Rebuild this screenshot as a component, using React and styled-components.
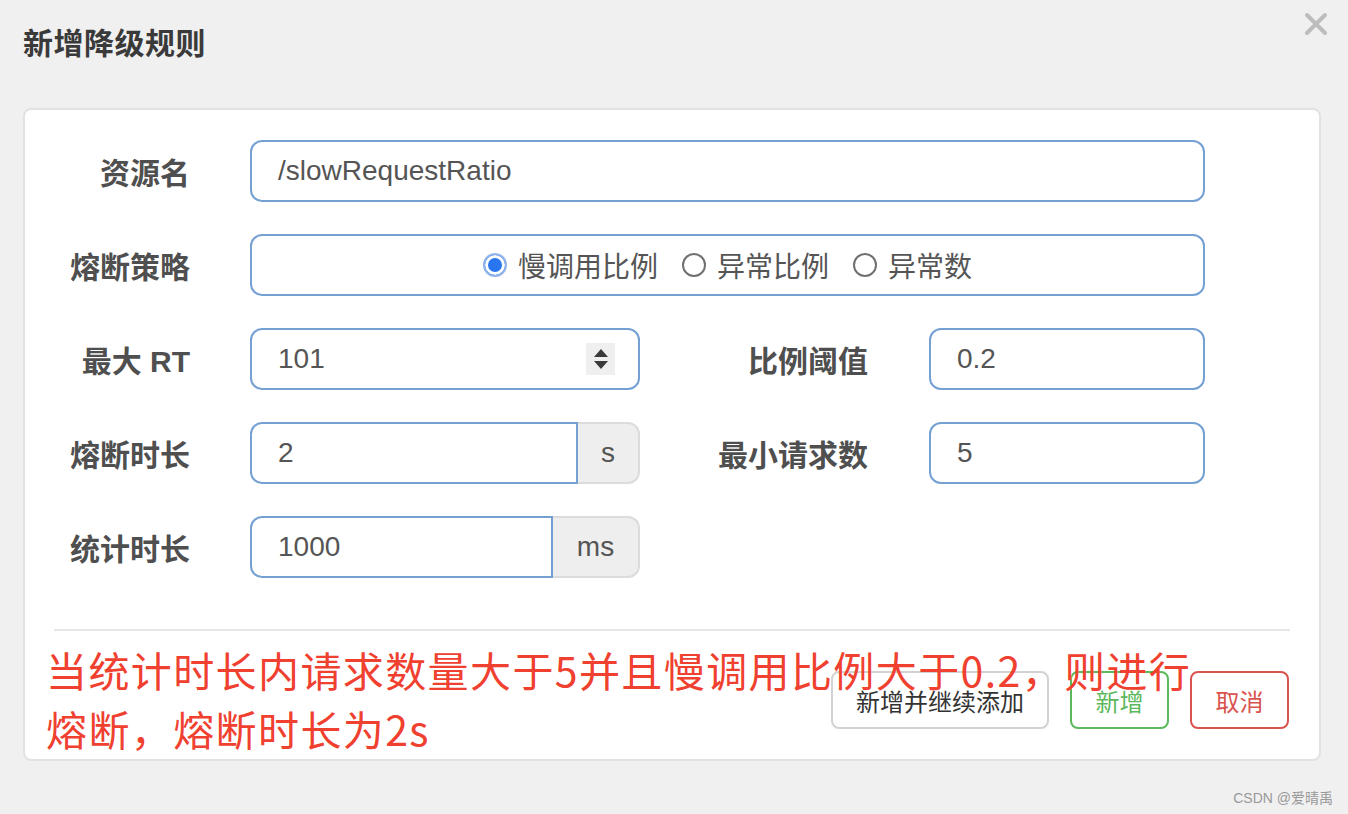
import styled, { createGlobalStyle } from "styled-components";

const GlobalStyle = createGlobalStyle`
  body {
    margin: 0;
    background: #f0f0f0;
    font-family: "Liberation Sans", "Noto Sans CJK SC", sans-serif;
  }
`;

const Page = styled.div`
  position: relative;
  width: 1348px;
  height: 814px;
  padding-left: 23px;
  box-sizing: border-box;
  overflow: hidden;
  background: #f0f0f0;
`;

const Header = styled.div`
  display: flex;
  justify-content: space-between;
  align-items: flex-start;
  width: 1305px;
  height: 108px;
`;

const Title = styled.h4`
  margin: 29px 0 0;
  font-size: 30px;
  line-height: 30px;
  font-weight: bold;
  letter-spacing: 0.5px;
  color: #3a3a3a;
`;

const CloseButton = styled.button`
  display: flex;
  margin-top: 12px;
  padding: 0;
  border: none;
  background: transparent;
  cursor: pointer;
`;

const Card = styled.div`
  position: relative;
  width: 1298px;
  box-sizing: border-box;
  padding: 30px 0;
  background: #fff;
  border: 2px solid #e2e2e2;
  border-radius: 8px;
`;

const Form = styled.div`
  display: flex;
  flex-direction: column;
  gap: 32px;
  padding-right: 114px;
`;

const Row = styled.div`
  display: flex;
  align-items: center;
  height: 62px;
`;

const Label = styled.label`
  flex: none;
  width: ${({ w }) => w || 165}px;
  margin-right: ${({ gap }) => gap || 60}px;
  text-align: right;
  font-size: 30px;
  font-weight: bold;
  color: #4f4f4f;
  white-space: nowrap;
`;

const Field = styled.div`
  display: flex;
  align-items: center;
  justify-content: ${({ center }) => (center ? "center" : "flex-start")};
  width: ${({ w }) => (w ? `${w}px` : "auto")};
  flex: ${({ w }) => (w ? "none" : "1")};
  height: 62px;
  box-sizing: border-box;
  padding: 0 ${({ center }) => (center ? 0 : 26)}px;
  border: 2px solid #74a0d3;
  border-radius: ${({ joined }) => (joined ? "12px 0 0 12px" : "12px")};
  font-size: 28px;
  color: #555;
  background: #fff;
`;

const Value = styled.span`
  flex: 1;
`;

const Group = styled.div`
  display: flex;
  width: ${({ w }) => w}px;
  flex: none;
`;

const Addon = styled.div`
  display: flex;
  align-items: center;
  justify-content: center;
  width: ${({ w }) => w}px;
  height: 62px;
  box-sizing: border-box;
  background: #eee;
  border: 2px solid #dcdcdc;
  border-left: none;
  border-radius: 0 12px 12px 0;
  font-size: 28px;
  color: #555;
`;

const Spinner = styled.div`
  display: flex;
  flex-direction: column;
  align-items: center;
  justify-content: center;
  gap: 4px;
  width: 29px;
  height: 32px;
  margin-right: -3px;
  background: #efefef;
`;

const Radios = styled.div`
  display: flex;
  align-items: center;
`;

const RadioItem = styled.span`
  display: flex;
  align-items: center;
  gap: 11px;
  margin-right: 24px;
  font-family: "Noto Sans CJK SC", sans-serif;
  font-size: 28px;
  color: #555;
  &:last-child {
    margin-right: 0;
  }
`;

const RadioDot = styled.span`
  width: 24px;
  height: 24px;
  box-sizing: border-box;
  border-radius: 50%;
  border: 2px solid ${({ checked }) => (checked ? "#8fb3ea" : "#707070")};
  background: ${({ checked }) => (checked ? "#2a76ee" : "#fff")};
  box-shadow: ${({ checked }) => (checked ? "inset 0 0 0 3px #fff" : "none")};
`;

const Divider = styled.hr`
  margin: 51px 29px 0;
  border: none;
  height: 2px;
  background: #e6e6e6;
`;

const Footer = styled.div`
  display: flex;
  justify-content: flex-end;
  gap: 21px;
  padding: 40px 30px 0 0;
`;

const Button = styled.button`
  width: ${({ w }) => w}px;
  height: 58px;
  padding: 0;
  background: #fff;
  border: 2px solid ${({ color }) => color || "#d2d2d2"};
  border-radius: 8px;
  font-family: "Noto Sans CJK SC", sans-serif;
  font-size: 24px;
  color: ${({ color }) => color || "#333"};
  cursor: pointer;
`;

const Note = styled.div`
  position: absolute;
  left: 21px;
  top: 530px;
  font-family: "Noto Sans CJK SC", sans-serif;
  font-size: 41px;
  line-height: 59px;
  letter-spacing: 1.4px;
  color: #f0402f;
  white-space: nowrap;
  pointer-events: none;
`;

const Watermark = styled.div`
  position: absolute;
  right: 15px;
  bottom: 7px;
  font-family: "Liberation Sans", "Noto Sans CJK SC", sans-serif;
  font-size: 14px;
  color: #999;
`;

const Triangle = ({ up }) => (
  <svg width="14" height="8" viewBox="0 0 14 8">
    <path d={up ? "M7 0 L14 8 L0 8 Z" : "M0 0 L14 0 L7 8 Z"} fill="#3a3a3a" />
  </svg>
);

export default function App() {
  return (
    <>
      <GlobalStyle />
      <Page>
        <Header>
          <Title>新增降级规则</Title>
          <CloseButton aria-label="close">
            <svg width="24" height="24" viewBox="0 0 24 24">
              <path d="M3 3 L21 21 M21 3 L3 21" stroke="#bdbdbd" strokeWidth="4" strokeLinecap="round" />
            </svg>
          </CloseButton>
        </Header>
        <Card>
          <Form>
            <Row>
              <Label>资源名</Label>
              <Field>
                <Value>/slowRequestRatio</Value>
              </Field>
            </Row>
            <Row>
              <Label>熔断策略</Label>
              <Field center>
                <Radios>
                  <RadioItem>
                    <RadioDot checked />
                    慢调用比例
                  </RadioItem>
                  <RadioItem>
                    <RadioDot />
                    异常比例
                  </RadioItem>
                  <RadioItem>
                    <RadioDot />
                    异常数
                  </RadioItem>
                </Radios>
              </Field>
            </Row>
            <Row>
              <Label>最大 RT</Label>
              <Field w={390}>
                <Value>101</Value>
                <Spinner>
                  <Triangle up />
                  <Triangle />
                </Spinner>
              </Field>
              <Label w={228} gap={61}>比例阈值</Label>
              <Field>
                <Value>0.2</Value>
              </Field>
            </Row>
            <Row>
              <Label>熔断时长</Label>
              <Group w={390}>
                <Field joined>
                  <Value>2</Value>
                </Field>
                <Addon w={62}>s</Addon>
              </Group>
              <Label w={228} gap={61}>最小请求数</Label>
              <Field>
                <Value>5</Value>
              </Field>
            </Row>
            <Row>
              <Label>统计时长</Label>
              <Group w={390}>
                <Field joined>
                  <Value>1000</Value>
                </Field>
                <Addon w={87}>ms</Addon>
              </Group>
            </Row>
          </Form>
          <Divider />
          <Footer>
            <Button w={218}>新增并继续添加</Button>
            <Button w={99} color="#5cb85c">新增</Button>
            <Button w={99} color="#d9534f">取消</Button>
          </Footer>
          <Note>
            当统计时长内请求数量大于5并且慢调用比例大于0.2，则进行
            <br />
            熔断，熔断时长为2s
          </Note>
        </Card>
        <Watermark>CSDN @爱晴禹</Watermark>
      </Page>
    </>
  );
}
